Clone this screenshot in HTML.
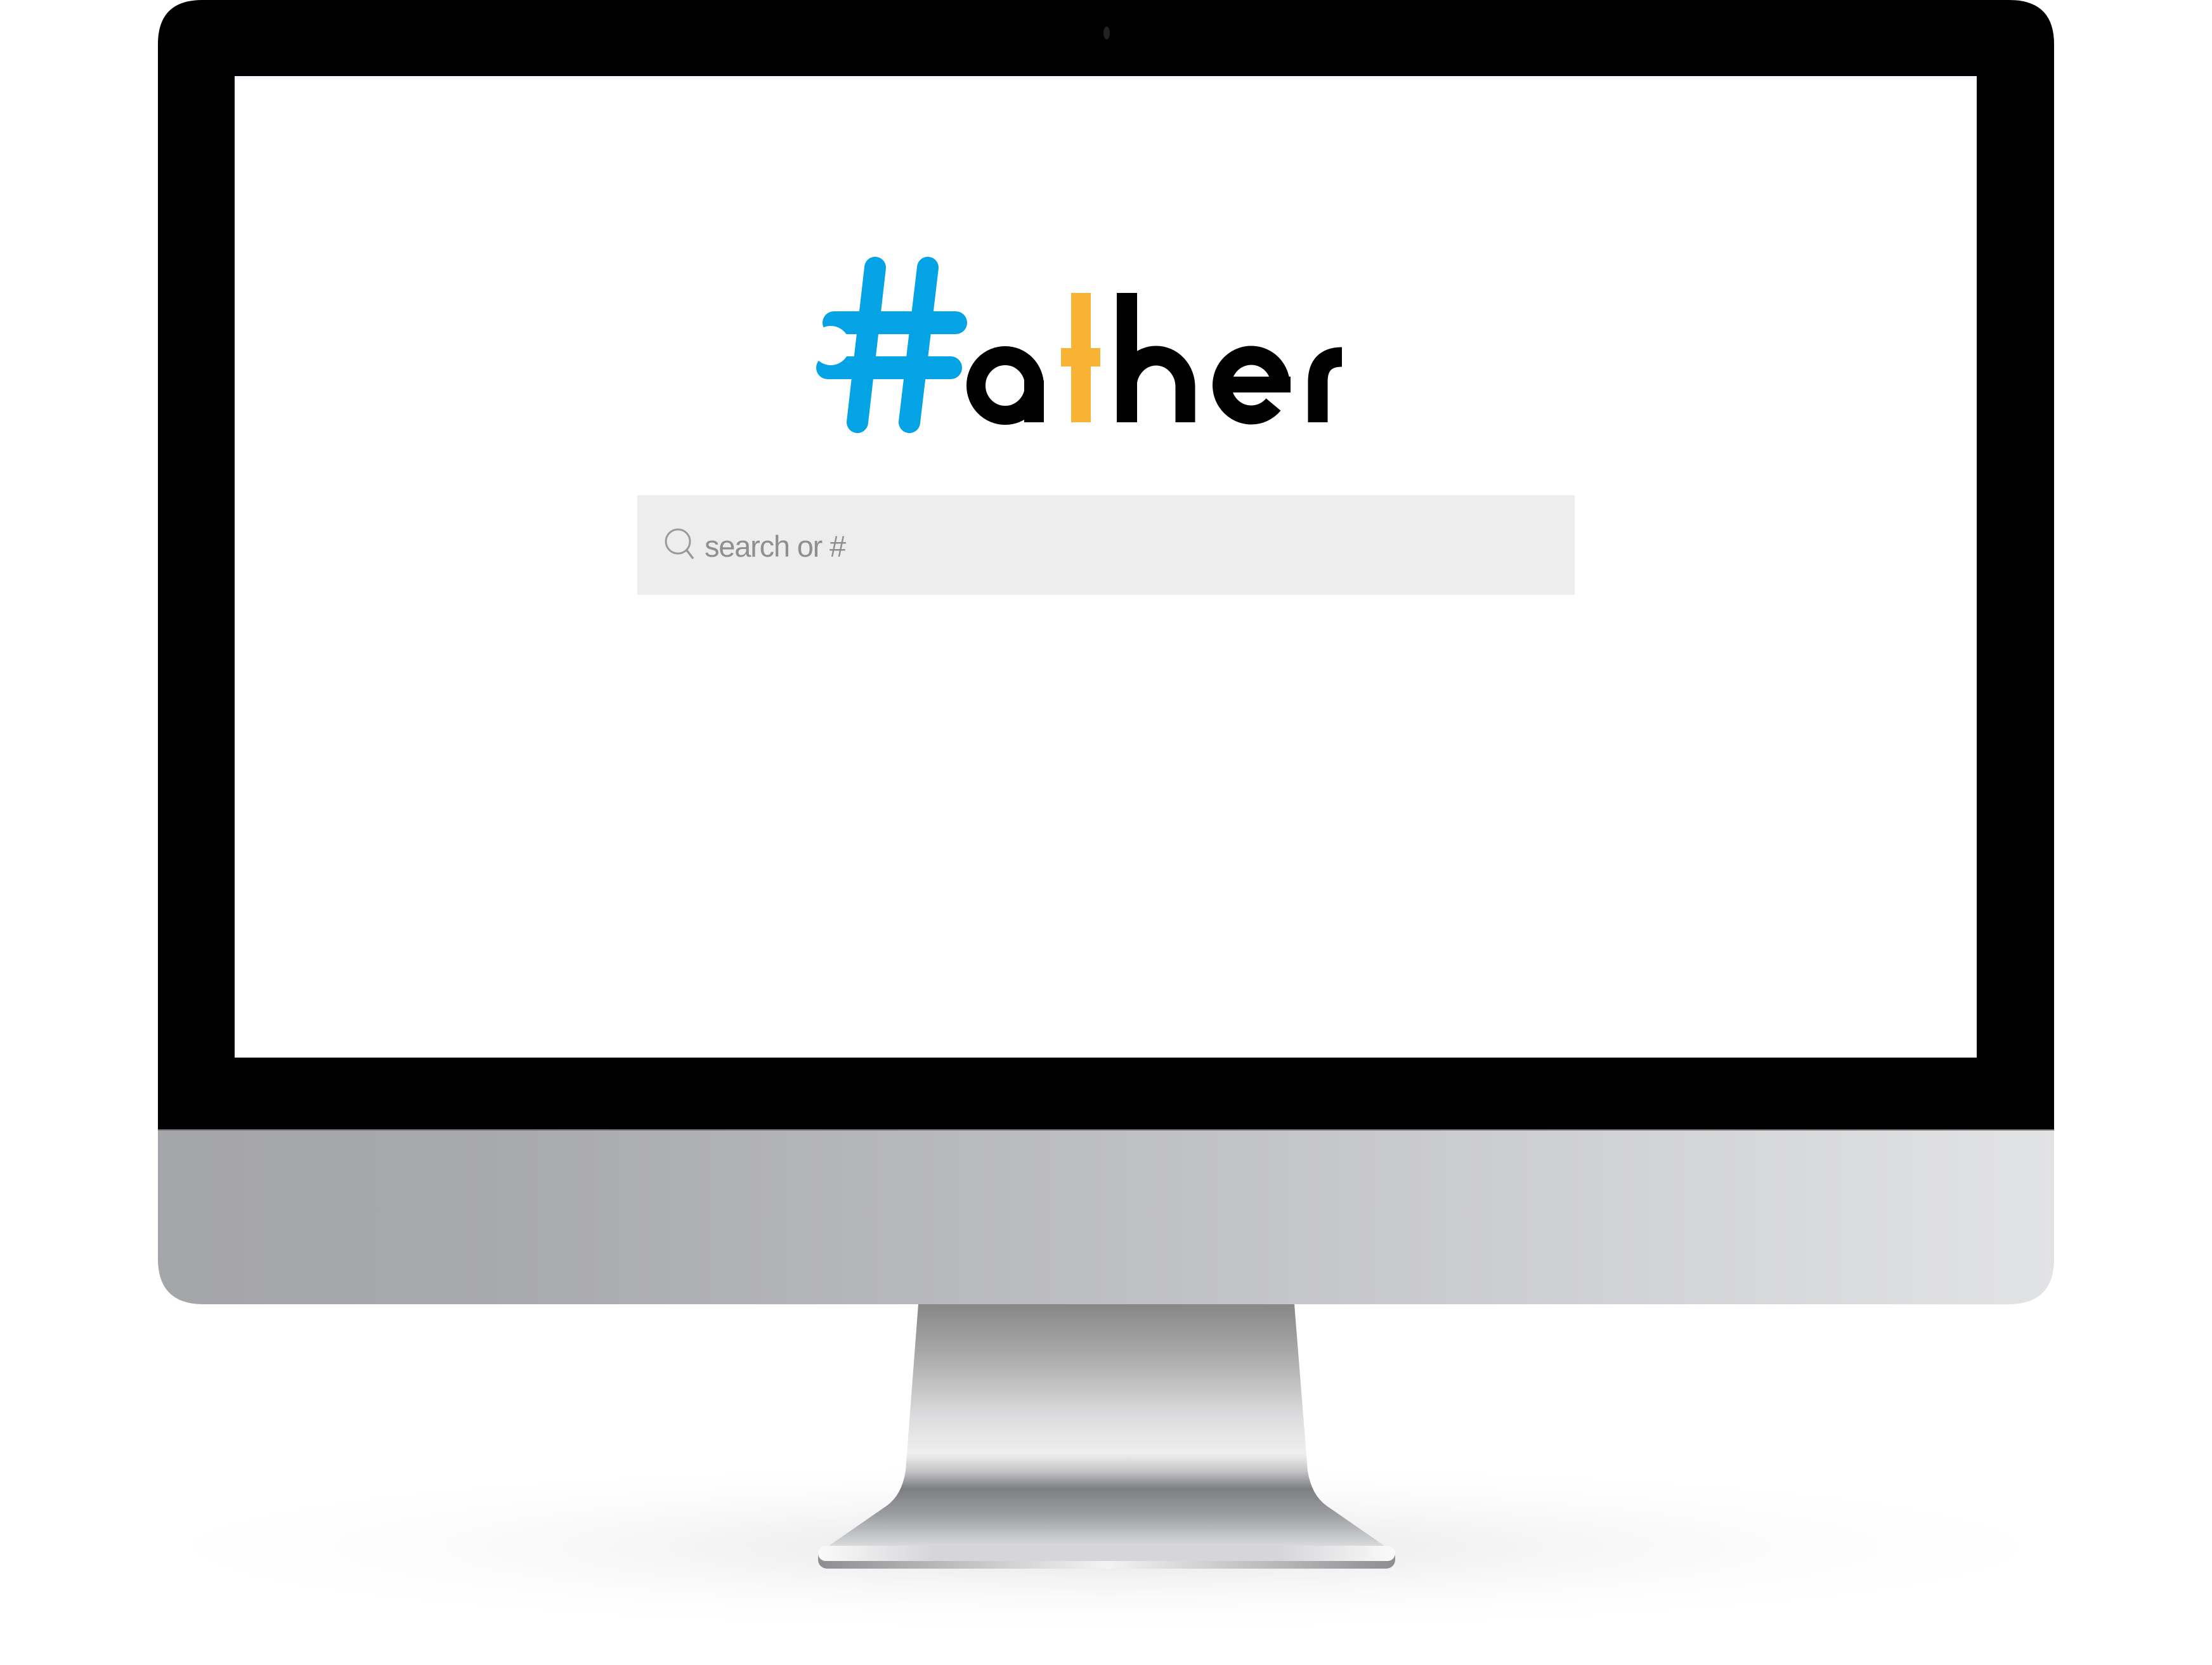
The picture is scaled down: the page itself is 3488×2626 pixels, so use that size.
<!DOCTYPE html>
<html><head><meta charset="utf-8"><style>
html,body{margin:0;padding:0;background:#fff;width:3488px;height:2626px;overflow:hidden}
svg{display:block}
.t{font-family:"Liberation Sans",Arial,sans-serif}
</style></head><body>
<svg width="3488" height="2626" viewBox="0 0 3488 2626" xmlns="http://www.w3.org/2000/svg">
<defs>
<linearGradient id="chin" x1="0" x2="1" y1="0" y2="0">
<stop offset="0" stop-color="#a5a6aa"/><stop offset="0.16" stop-color="#a7a8ac"/><stop offset="0.55" stop-color="#c1c2c6"/><stop offset="1" stop-color="#e2e3e5"/>
</linearGradient>
<linearGradient id="neck" x1="0" x2="0" y1="2057" y2="2450" gradientUnits="userSpaceOnUse">
<stop offset="0" stop-color="#878787"/><stop offset="0.2" stop-color="#a9a9a9"/><stop offset="0.45" stop-color="#dcdcde"/><stop offset="0.6" stop-color="#efeff0"/><stop offset="0.67" stop-color="#c5c5c7"/><stop offset="0.74" stop-color="#7d7e82"/><stop offset="0.84" stop-color="#9a9b9f"/><stop offset="0.95" stop-color="#cfd0d3"/><stop offset="1" stop-color="#e8e8ea"/>
</linearGradient>
<linearGradient id="base" x1="0" x2="1"><stop offset="0" stop-color="#8e8e92"/><stop offset="0.5" stop-color="#f3f3f4"/><stop offset="1" stop-color="#8e8e92"/></linearGradient>
<linearGradient id="plate" x1="0" x2="1"><stop offset="0" stop-color="#fafafa"/><stop offset="0.2" stop-color="#d6d6d9"/><stop offset="0.8" stop-color="#d6d6d9"/><stop offset="1" stop-color="#fafafa"/></linearGradient>
<radialGradient id="sh" cx="0.5" cy="0.5" r="0.5"><stop offset="0" stop-color="#cdced1" stop-opacity="0.6"/><stop offset="1" stop-color="#fff" stop-opacity="0"/></radialGradient>
</defs>
<ellipse cx="1745" cy="2440" rx="1600" ry="140" fill="url(#sh)"/>
<!-- neck -->
<path d="M1448 2057 L2041 2057 L2062 2320 Q2068 2358 2092 2375 L2196 2447 L1294 2447 L1398 2375 Q1422 2358 1428 2320 Z" fill="url(#neck)"/>
<rect x="1290" y="2440" width="910" height="34" rx="14" fill="url(#base)"/>
<rect x="1290" y="2438" width="910" height="24" rx="12" fill="url(#plate)"/>
<!-- body -->
<path d="M319 0 H3168 Q3239 0 3239 70 V1782 H249 V70 Q249 0 319 0 Z" fill="#000"/>
<path d="M249 1782 H3239 V1985 Q3239 2057 3167 2057 H321 Q249 2057 249 1985 Z" fill="url(#chin)"/>
<rect x="249" y="1781" width="2990" height="2" fill="#6f6f72"/>
<ellipse cx="1745" cy="52" rx="5" ry="10" fill="#222"/>
<rect x="370" y="120" width="2747" height="1548" fill="#fff"/>
<rect x="370" y="120" width="2747" height="5" fill="#f3f6fd"/>
<!-- search -->
<rect x="1005" y="781" width="1478" height="157" fill="#ededed"/>
<circle cx="1069" cy="854" r="19" fill="none" stroke="#9a9a9a" stroke-width="3"/>
<line x1="1083" y1="868" x2="1093" y2="881" stroke="#9a9a9a" stroke-width="3.5"/>
<text x="1111" y="878" class="t" font-size="47" fill="#8f8f8f" letter-spacing="-1.2">search or #</text>
<!-- logo hash -->
<g stroke="#03a3e5" stroke-linecap="round" fill="none">
<line x1="1380" y1="422" x2="1352" y2="666" stroke-width="34"/>
<line x1="1463" y1="422" x2="1434" y2="666" stroke-width="34"/>
<line x1="1315" y1="509" x2="1507" y2="509" stroke-width="36"/>
<line x1="1305" y1="580" x2="1499" y2="580" stroke-width="36"/>
</g>
<ellipse cx="1310" cy="545" rx="30" ry="31" fill="#fff"/>
<!-- a -->
<ellipse cx="1585" cy="608" rx="46" ry="47" fill="none" stroke="#000" stroke-width="30"/>
<rect x="1615" y="600" width="31" height="66" fill="#000"/>
<!-- t -->
<rect x="1689" y="462" width="31" height="204" fill="#f8b334"/>
<rect x="1673" y="549" width="62" height="29" fill="#f8b334"/>
<!-- h -->
<rect x="1761" y="462" width="32" height="204" fill="#000"/>
<path d="M1777 666 V610 A46 49 0 0 1 1869 610 V666" fill="none" stroke="#000" stroke-width="31"/>
<!-- e -->
<rect x="1930" y="594" width="105" height="25" fill="#000"/>
<path d="M2019 606 A46 47 0 1 0 2008 638" fill="none" stroke="#000" stroke-width="30"/>
<!-- r -->
<path d="M2078 666 V602 Q2078 563 2116 563" fill="none" stroke="#000" stroke-width="31"/>
</svg>
</body></html>
